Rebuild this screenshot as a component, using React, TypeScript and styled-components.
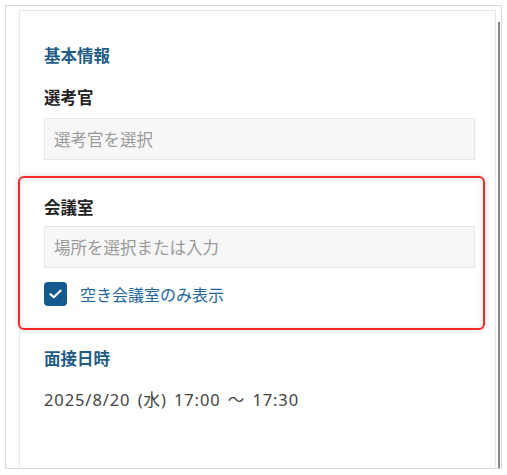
import React from "react";
import styled, { createGlobalStyle } from "styled-components";

const Global = createGlobalStyle`
  html, body { margin: 0; padding: 0; background: #ffffff; }
  body { font-family: "Noto Sans", "Noto Sans CJK JP", sans-serif; }
  * { box-sizing: border-box; }
`;

const Frame = styled.div`
  margin: 5px 0 0 5px;
  width: 497px;
  height: 464px;
  border: 1px solid #d9d9d9;
  display: flex;
  align-items: stretch;
  padding: 4px 0 0 13px;
`;

const Panel = styled.div`
  width: 477px;
  border: 1px solid #e8e8e8;
  border-bottom: none;
  padding: 0 20px 0 24px;
  display: flex;
  flex-direction: column;
`;

const ScrollBar = styled.div`
  width: 2px;
  margin: 12px 0 0 2px;
  background: #8a8a8a;
`;

const SectionTitle = styled.div<{ $top: number }>`
  margin-top: ${(p) => p.$top}px;
  font-size: 16.5px;
  line-height: 24px;
  font-weight: 700;
  color: #1f5c87;
  font-family: "Noto Sans CJK JP", sans-serif;
`;

const Label = styled.div<{ $top: number }>`
  margin-top: ${(p) => p.$top}px;
  font-size: 16.5px;
  line-height: 24px;
  font-weight: 700;
  color: #222222;
  font-family: "Noto Sans CJK JP", sans-serif;
`;

const Field = styled.div<{ $top: number }>`
  margin-top: ${(p) => p.$top}px;
  height: 42px;
  background: #f7f7f7;
  border: 1px solid #e6e6e6;
  display: flex;
  align-items: center;
  padding-left: 9px;
  font-size: 16.5px;
  color: #9a9a9a;
  font-family: "Noto Sans CJK JP", sans-serif;
`;

const Highlight = styled.div`
  margin: 16px -10px 0 -26px;
  border: 2px solid #f32a2a;
  border-radius: 6px;
  padding: 17px 8px 22px 24px;
  box-shadow: 0 0 6px rgba(0, 0, 0, 0.14), inset 0 0 6px rgba(0, 0, 0, 0.1);
  display: flex;
  flex-direction: column;
`;

const CheckRow = styled.label`
  margin-top: 14px;
  height: 24px;
  display: flex;
  align-items: center;
  gap: 13px;
  font-size: 16px;
  color: #2366a0;
  font-family: "Noto Sans CJK JP", sans-serif;
`;

const Box = styled.span`
  width: 23px;
  height: 24px;
  border-radius: 4px;
  background: #155a8e;
  display: flex;
  align-items: center;
  justify-content: center;
`;

const DateText = styled.div`
  margin-top: 18px;
  font-size: 16.5px;
  line-height: 24px;
  color: #444444;
  word-spacing: 2px;
  letter-spacing: 0.9px;
`;

export default function App() {
  return (
    <>
      <Global />
      <Frame>
        <Panel>
          <SectionTitle $top={32}>基本情報</SectionTitle>
          <Label $top={18}>選考官</Label>
          <Field $top={9}>選考官を選択</Field>
          <Highlight>
            <Label $top={0}>会議室</Label>
            <Field $top={7}>場所を選択または入力</Field>
            <CheckRow>
              <Box>
                <svg width="13" height="10" viewBox="0 0 13 10">
                  <path d="M1.5 5.2 L4.8 8.3 L11.5 1.7" fill="none" stroke="#fff" strokeWidth="2.2" strokeLinecap="round" strokeLinejoin="round" />
                </svg>
              </Box>
              空き会議室のみ表示
            </CheckRow>
          </Highlight>
          <SectionTitle $top={16}>面接日時</SectionTitle>
          <DateText>2025/8/20 (水) 17:00 〜 17:30</DateText>
        </Panel>
        <ScrollBar />
      </Frame>
    </>
  );
}
